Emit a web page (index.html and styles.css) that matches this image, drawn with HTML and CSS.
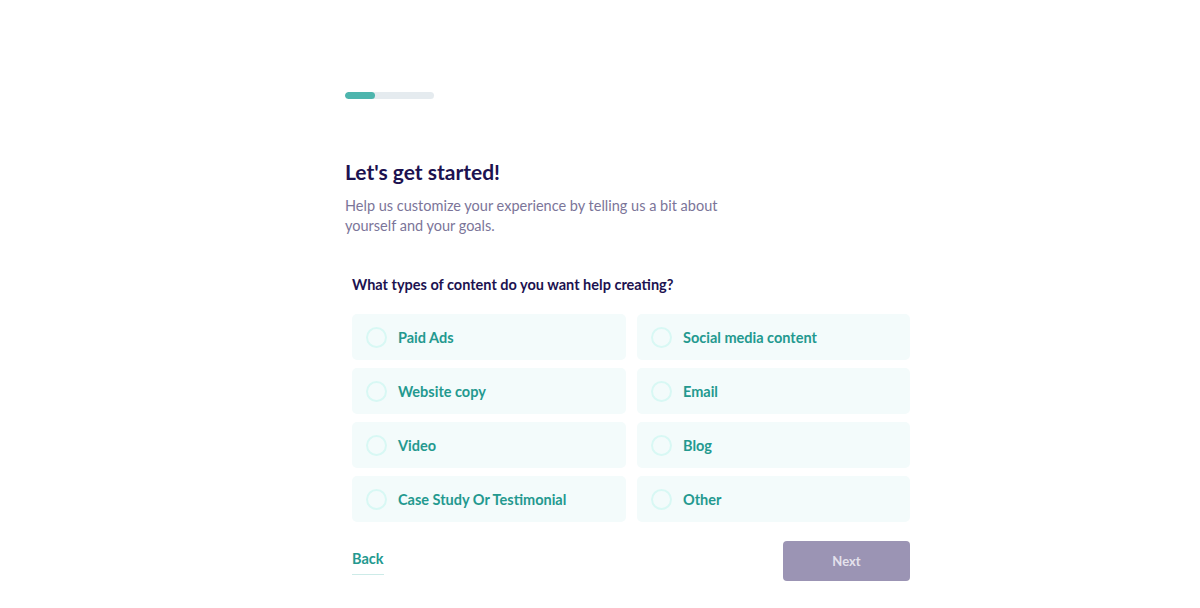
FILE: index.html
```html
<!DOCTYPE html>
<html lang="en">
<head>
  <meta charset="UTF-8">
  <meta name="viewport" content="width=device-width, initial-scale=1.0">
  <title>Let's get started</title>
  <link rel="stylesheet" href="styles.css">
</head>
<body>
  <div class="wrap">
    <div class="progress"><div class="progress-fill"></div></div>

    <h1>Let's get started!</h1>
    <p class="intro">Help us customize your experience by telling us a bit about yourself and your goals.</p>

    <div class="question">
      <h2>What types of content do you want help creating?</h2>

      <div class="options">
        <label class="option"><span class="radio"></span>Paid Ads</label>
        <label class="option"><span class="radio"></span>Social media content</label>
        <label class="option"><span class="radio"></span>Website copy</label>
        <label class="option"><span class="radio"></span>Email</label>
        <label class="option"><span class="radio"></span>Video</label>
        <label class="option"><span class="radio"></span>Blog</label>
        <label class="option"><span class="radio"></span>Case Study Or Testimonial</label>
        <label class="option"><span class="radio"></span>Other</label>
      </div>

      <div class="actions">
        <a class="back" href="#">Back</a>
        <button class="next" disabled>Next</button>
      </div>
    </div>
  </div>
</body>
</html>
```

FILE: styles.css
```css
body {
  margin: 0;
  padding: 0;
  font-family: Lato, "Noto Sans", sans-serif;
  background: #ffffff;
}

.wrap {
  width: 566px;
  margin-left: calc(50% - 255px);
  padding-top: 92px;
}

.progress {
  width: 89px;
  height: 7px;
  border-radius: 4px;
  background: #e5ebef;
  overflow: hidden;
}

.progress-fill {
  width: 30px;
  height: 100%;
  background: #4db5ad;
  border-radius: 4px;
}

h1 {
  margin: 59px 0 0;
  font-size: 21px;
  line-height: 28px;
  font-weight: 700;
  color: #1c1250;
}

.intro {
  margin: 10px 0 0;
  width: 380px;
  font-size: 14.5px;
  line-height: 20px;
  color: #7b7599;
}

.question {
  width: 558px;
  margin-left: 7px;
  padding-top: 39px;
}

h2 {
  margin: 0;
  font-size: 14.5px;
  line-height: 20px;
  font-weight: 700;
  color: #1c1250;
}

.options {
  margin-top: 19px;
  display: grid;
  grid-template-columns: 274px 273px;
  column-gap: 11px;
  row-gap: 8px;
}

.option {
  height: 46px;
  display: flex;
  align-items: center;
  padding-left: 14px;
  background: #f3fbfb;
  border-radius: 5px;
  font-size: 14.5px;
  font-weight: 700;
  color: #23998f;
  cursor: pointer;
}

.radio {
  width: 17px;
  height: 17px;
  border: 2px solid #d8f8f4;
  border-radius: 50%;
  margin-right: 11px;
  background: #f3fbfb;
}

.actions {
  margin-top: 19px;
  display: flex;
  justify-content: space-between;
  align-items: flex-start;
}

.back {
  margin-top: 8px;
  font-size: 14.5px;
  line-height: 20px;
  font-weight: 700;
  color: #23998f;
  text-decoration: none;
  padding-bottom: 5px;
  border-bottom: 1px solid #cdebe8;
}

.next {
  width: 127px;
  height: 40px;
  border: none;
  border-radius: 4px;
  background: #9b94b4;
  color: #e4e1ec;
  font-family: Lato, "Noto Sans", sans-serif;
  font-size: 13px;
  font-weight: 700;
}
```
